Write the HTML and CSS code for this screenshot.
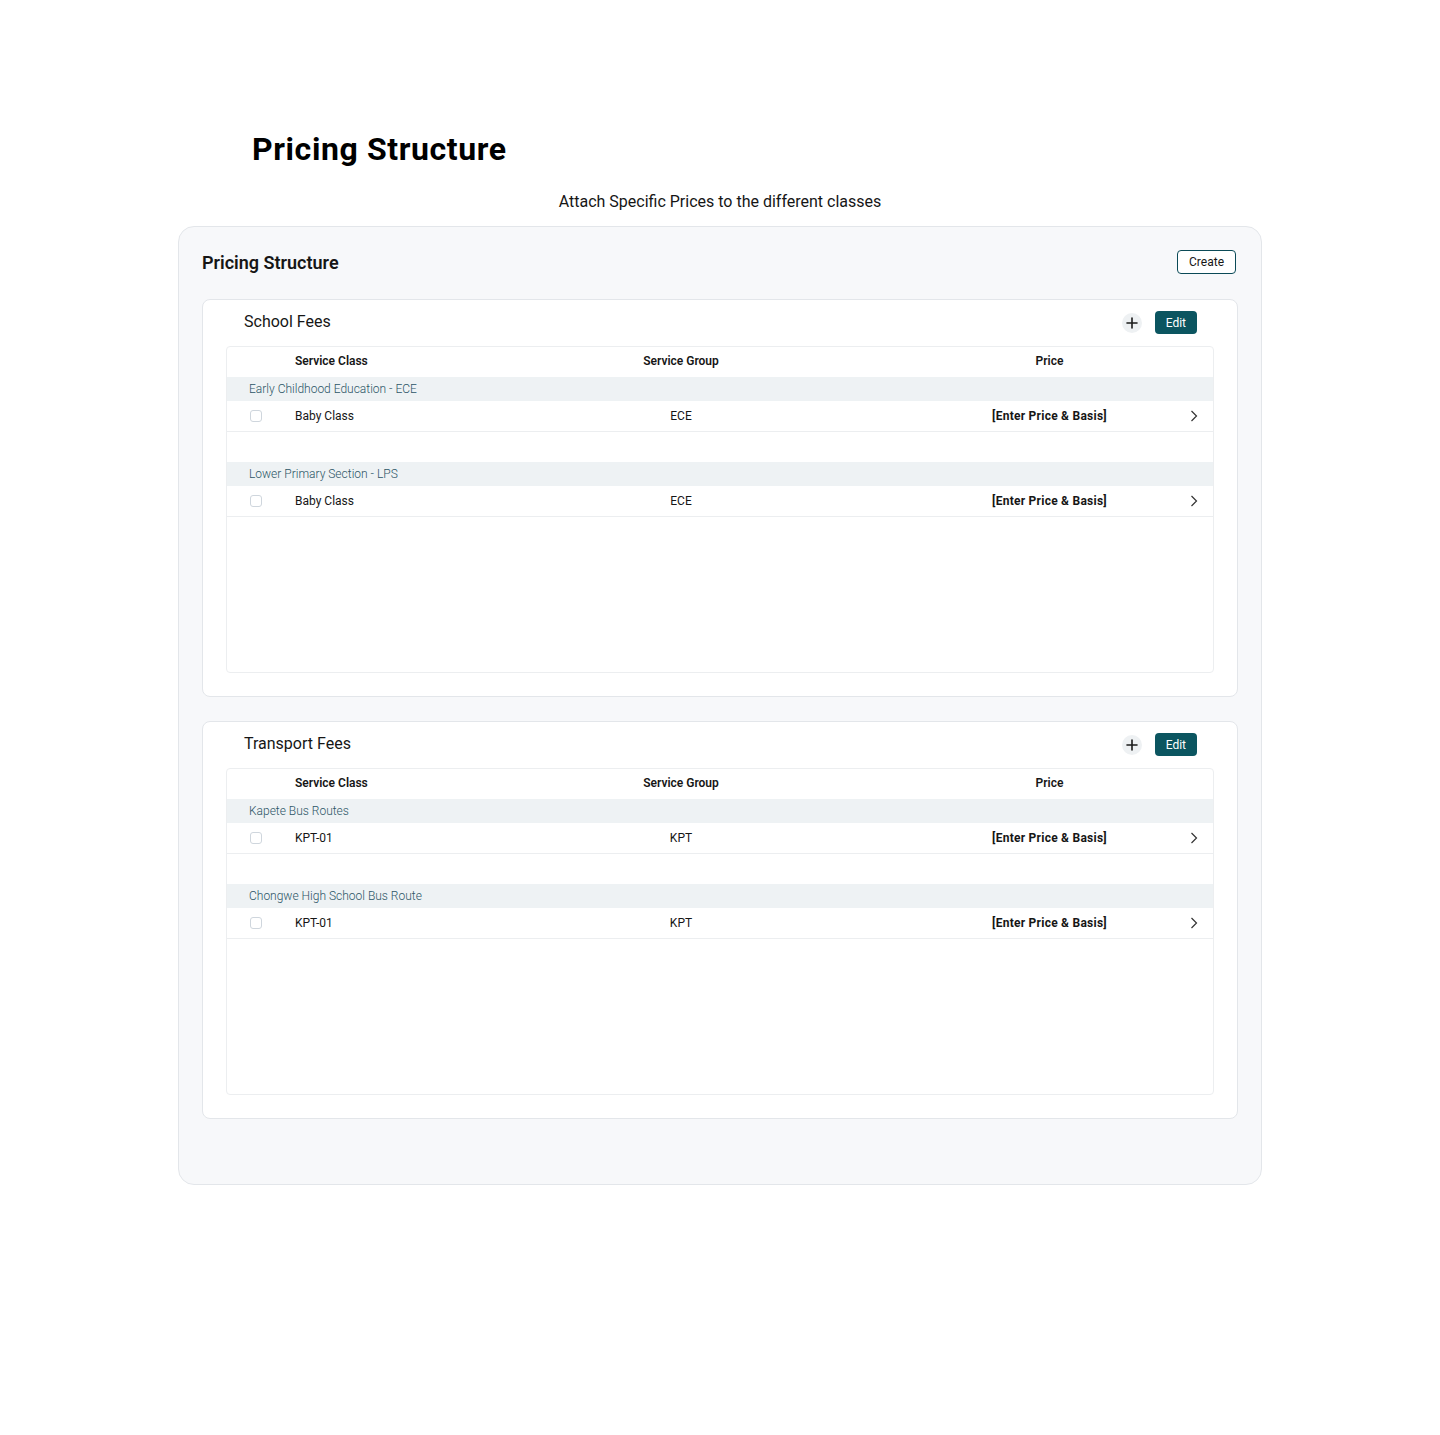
FILE: index.html
```html
<!DOCTYPE html>
<html lang="en">
<head>
<meta charset="utf-8">
<title>Pricing Structure</title>
<link rel="stylesheet" href="styles.css">
</head>
<body>
<div class="page">
  <h1 class="page-title">Pricing Structure</h1>
  <p class="page-subtitle">Attach Specific Prices to the different classes</p>

  <section class="outer-card">
    <div class="outer-header">
      <h2 class="outer-title">Pricing Structure</h2>
      <button class="btn-outline">Create</button>
    </div>

    <div class="fee-card">
      <div class="fee-header">
        <h3 class="fee-title">School Fees</h3>
        <div class="fee-actions">
          <span class="plus-btn"><svg width="12" height="12" viewBox="0 0 12 12"><path d="M6 1v10M1 6h10" stroke="#1b1b1b" stroke-width="1.6" stroke-linecap="round"/></svg></span>
          <button class="btn-solid">Edit</button>
        </div>
      </div>
      <div class="table">
        <div class="row head">
          <div></div><div class="c-class">Service Class</div><div class="c-group">Service Group</div><div></div><div class="c-price">Price</div><div></div>
        </div>
        <div class="group-row">Early Childhood Education - ECE</div>
        <div class="row data">
          <div class="c-check"><span class="checkbox"></span></div><div class="c-class">Baby Class</div><div class="c-group">ECE</div><div></div><div class="c-price strong">[Enter Price &amp; Basis]</div><div class="c-chev"><svg width="8" height="12" viewBox="0 0 8 12"><path d="M1.5 1l5 5-5 5" fill="none" stroke="#333" stroke-width="1.2"/></svg></div>
        </div>
        <div class="spacer-row"></div>
        <div class="group-row">Lower Primary Section - LPS</div>
        <div class="row data">
          <div class="c-check"><span class="checkbox"></span></div><div class="c-class">Baby Class</div><div class="c-group">ECE</div><div></div><div class="c-price strong">[Enter Price &amp; Basis]</div><div class="c-chev"><svg width="8" height="12" viewBox="0 0 8 12"><path d="M1.5 1l5 5-5 5" fill="none" stroke="#333" stroke-width="1.2"/></svg></div>
        </div>
      </div>
    </div>

    <div class="fee-card">
      <div class="fee-header">
        <h3 class="fee-title">Transport Fees</h3>
        <div class="fee-actions">
          <span class="plus-btn"><svg width="12" height="12" viewBox="0 0 12 12"><path d="M6 1v10M1 6h10" stroke="#1b1b1b" stroke-width="1.6" stroke-linecap="round"/></svg></span>
          <button class="btn-solid">Edit</button>
        </div>
      </div>
      <div class="table">
        <div class="row head">
          <div></div><div class="c-class">Service Class</div><div class="c-group">Service Group</div><div></div><div class="c-price">Price</div><div></div>
        </div>
        <div class="group-row">Kapete Bus Routes</div>
        <div class="row data">
          <div class="c-check"><span class="checkbox"></span></div><div class="c-class">KPT-01</div><div class="c-group">KPT</div><div></div><div class="c-price strong">[Enter Price &amp; Basis]</div><div class="c-chev"><svg width="8" height="12" viewBox="0 0 8 12"><path d="M1.5 1l5 5-5 5" fill="none" stroke="#333" stroke-width="1.2"/></svg></div>
        </div>
        <div class="spacer-row"></div>
        <div class="group-row">Chongwe High School Bus Route</div>
        <div class="row data">
          <div class="c-check"><span class="checkbox"></span></div><div class="c-class">KPT-01</div><div class="c-group">KPT</div><div></div><div class="c-price strong">[Enter Price &amp; Basis]</div><div class="c-chev"><svg width="8" height="12" viewBox="0 0 8 12"><path d="M1.5 1l5 5-5 5" fill="none" stroke="#333" stroke-width="1.2"/></svg></div>
        </div>
      </div>
    </div>
  </section>
</div>
</body>
</html>
```

FILE: styles.css
```css
* { box-sizing: border-box; }
html, body { margin: 0; padding: 0; background: #ffffff; }
body {
  font-family: Roboto, "Noto Sans", "Liberation Sans", sans-serif;
  color: #161616;
}
.page {
  width: 1084px;
  margin: 0 auto;
  padding-top: 129px;
}
.page-title {
  margin: 0 0 0 74px;
  font-size: 32px;
  line-height: 40px;
  font-weight: 700;
  letter-spacing: 0.6px;
  color: #000;
}
.page-subtitle {
  margin: 21px 0 12px;
  text-align: center;
  font-size: 16px;
  line-height: 24px;
  color: #161616;
}
.outer-card {
  background: #f7f8fa;
  border: 1px solid #e3e6ea;
  border-radius: 16px;
  padding: 23px 23px 65px;
}
.outer-header {
  display: flex;
  justify-content: space-between;
  align-items: center;
  height: 24px;
  margin-bottom: 25px;
}
.outer-title {
  margin: 0;
  font-size: 18px;
  font-weight: 600;
  color: #161616;
}
.btn-outline {
  font-family: inherit;
  font-size: 12px;
  line-height: 22px;
  height: 24px;
  padding: 0 11px;
  margin-right: 2px;
  background: #fff;
  color: #161616;
  border: 1px solid #0b4a57;
  border-radius: 4px;
}
.fee-card {
  background: #fff;
  border: 1px solid #e3e6ea;
  border-radius: 8px;
  padding: 11px 23px 23px;
}
.fee-card + .fee-card { margin-top: 24px; }
.fee-header {
  display: flex;
  justify-content: space-between;
  align-items: center;
  height: 23px;
  padding: 0 17px 0 18px;
  margin-bottom: 12px;
}
.fee-title {
  margin: 0 0 2px;
  font-size: 16px;
  font-weight: 400;
  color: #161616;
}
.fee-actions {
  display: flex;
  align-items: center;
  gap: 13px;
}
.plus-btn {
  width: 20px;
  height: 20px;
  border-radius: 50%;
  background: #eef1f3;
  display: flex;
  align-items: center;
  justify-content: center;
}
.btn-solid {
  font-family: inherit;
  font-size: 12px;
  height: 23px;
  padding: 0 11px;
  background: #0b5560;
  color: #fff;
  border: none;
  border-radius: 4px;
}
.table {
  border: 1px solid #eceef0;
  border-radius: 4px;
  height: 327px;
  font-size: 12px;
  color: #161616;
}
.row {
  display: grid;
  grid-template-columns: 68px 250px 272px 1fr 246px 42px;
  align-items: center;
}
.row.head { height: 30px; font-weight: 600; padding-bottom: 2px; }
.row.data { height: 31px; border-bottom: 1px solid #eceef0; }
.c-check { padding-left: 23px; display: flex; align-items: center; }
.checkbox {
  width: 12px;
  height: 12px;
  border: 1px solid #cfd6dd;
  border-radius: 3px;
  background: #fff;
}
.c-group, .c-price { text-align: center; }
.c-price { padding-left: 3px; }
.strong { font-weight: 700; letter-spacing: 0.25px; }
.c-chev { display: flex; justify-content: center; align-items: center; padding-left: 4px; }
.group-row {
  height: 24px;
  line-height: 24px;
  background: #eef2f4;
  padding-left: 22px;
  color: #2c5566;
  font-weight: 300;
}
.spacer-row { height: 30px; }
```
